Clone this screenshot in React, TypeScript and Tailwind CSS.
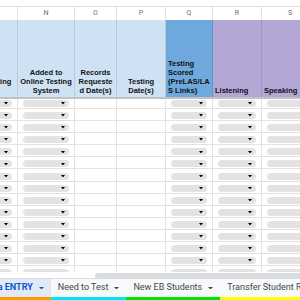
import React from "react";

type Col = {
  w: string;
  letter: string;
  bg: string;
  lines: string[];
  left: boolean;
  chip: boolean;
};

const cols: Col[] = [
  { w: "w-[66px]", letter: "M", bg: "bg-[#cfe2f3]", lines: ["Initial", "Parent Meeting", "Held"], left: false, chip: true },
  { w: "w-[57px]", letter: "N", bg: "bg-[#cfe2f3]", lines: ["Added to", "Online Testing", "System"], left: false, chip: true },
  { w: "w-[42px]", letter: "O", bg: "bg-[#cfe2f3]", lines: ["Records", "Requeste", "d Date(s)"], left: false, chip: false },
  { w: "w-[49px]", letter: "P", bg: "bg-[#cfe2f3]", lines: ["Testing", "Date(s)"], left: false, chip: false },
  { w: "w-[47px]", letter: "Q", bg: "bg-[#6fa8dc]", lines: ["Testing", "Scored", "(PreLAS/LA", "S Links)"], left: true, chip: true },
  { w: "w-[49px]", letter: "R", bg: "bg-[#b4a7d6]", lines: ["Listening"], left: true, chip: true },
  { w: "w-[57px]", letter: "S", bg: "bg-[#b4a7d6]", lines: ["Speaking"], left: true, chip: true },
];

function Arrow({ color = "#000", w = 4, h = 2.5 }: { color?: string; w?: number; h?: number }) {
  return (
    <svg width={w} height={h} viewBox={`0 0 ${w} ${h}`} className="shrink-0">
      <polygon points={`0,0 ${w},0 ${w / 2},${h}`} fill={color} />
    </svg>
  );
}

function Chip() {
  return (
    <div className="h-[7px] w-full rounded-full bg-[#e3e3e3] flex items-center justify-end pr-[4px]">
      <Arrow />
    </div>
  );
}

const tabs = [
  { name: "Data ENTRY", active: true, line: "border-[#ff9900]" },
  { name: "Need to Test", active: false, line: "border-[#00e5ff]" },
  { name: "New EB Students", active: false, line: "border-[#00e600]" },
  { name: "Transfer Student Records", active: false, line: "border-[#ffff00]" },
];

export default function App() {
  const rows = Array.from({ length: 15 }, (_, i) => i);
  return (
    <div className="w-[300px] h-[300px] overflow-hidden bg-white flex flex-col font-['Liberation_Sans',Arial,sans-serif]">
      {/* top strip */}
      <div className="h-[6px] shrink-0 bg-white" />
      {/* sheet */}
      <div className="flex-1 overflow-hidden flex flex-col">
        <div className="ml-[-48px] flex flex-col">
          {/* column letters */}
          <div className="flex h-[14px] shrink-0 border-t border-[#e0e0e0]">
            {cols.map((c) => (
              <div
                key={c.letter}
                className={`${c.w} shrink-0 border-r border-[#e0e0e0] flex items-center justify-center text-[7px] text-[#6b6f73] font-['Roboto',sans-serif]`}
              >
                {c.letter}
              </div>
            ))}
          </div>
          {/* header cells */}
          <div className="flex h-[77px] shrink-0">
            {cols.map((c) => (
              <div
                key={c.letter}
                className={`${c.w} ${c.bg} shrink-0 border-r border-black/10 flex flex-col justify-end pb-[2px] overflow-hidden text-[7.5px] leading-[9px] font-bold text-[#111111] whitespace-nowrap ${
                  c.left ? "items-start pl-[2px]" : "items-center"
                }`}
              >
                {c.lines.map((l, i) => (
                  <div key={i}>{l}</div>
                ))}
              </div>
            ))}
          </div>
          {/* frozen divider */}
          <div className="h-[2px] shrink-0 bg-[#c0c3c6]" />
          {/* data rows */}
          {rows.map((r) => (
            <div key={r} className={`flex shrink-0 ${r === 0 ? "h-[10px]" : "h-[12.1px]"}`}>
              {cols.map((c) => (
                <div
                  key={c.letter}
                  className={`${c.w} shrink-0 border-r border-b border-[#e2e2e2] flex items-center px-[5px] ${
                    r === 0 ? "" : "pt-[2px]"
                  }`}
                >
                  {c.chip ? <Chip /> : null}
                </div>
              ))}
            </div>
          ))}
        </div>
      </div>
      {/* horizontal scrollbar */}
      <div className="h-[6px] shrink-0 bg-white flex items-end">
        <div className="ml-[95px] flex-1 h-[5px] rounded-l-full bg-[#dadce0]" />
      </div>
      {/* tab bar */}
      <div className="h-[22px] shrink-0 border-t border-[#dadce0] bg-[#f8f9fa] overflow-hidden font-['Roboto',sans-serif] text-[9px]">
        <div className="ml-[-23px] flex h-full">
          {tabs.map((t) => (
            <div
              key={t.name}
              className={`shrink-0 h-full flex items-center gap-[6px] pl-[7px] pr-[7px] border-b-[3px] ${t.line} ${
                t.active ? "bg-[#e1e9f7] text-[#0b57d0] font-bold" : "text-[#444746]"
              }`}
            >
              <span className="whitespace-nowrap">{t.name}</span>
              <Arrow color={t.active ? "#0b57d0" : "#444746"} w={5} h={2.5} />
            </div>
          ))}
        </div>
      </div>
    </div>
  );
}
